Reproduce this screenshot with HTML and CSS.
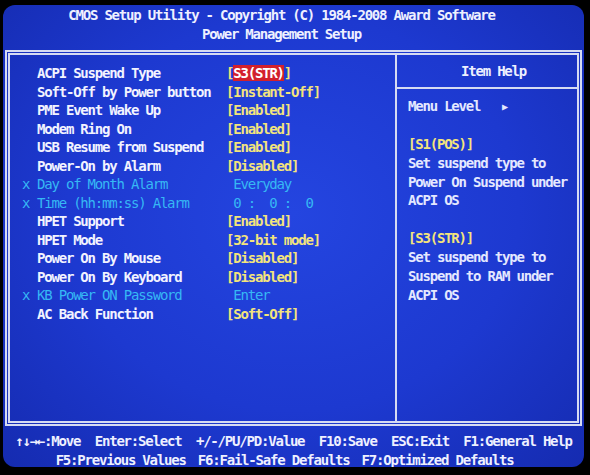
FILE: index.html
```html
<!DOCTYPE html>
<html lang="en">

<head>
    <meta charset="UTF-8">
    <meta name="viewport" content="width=device-width, initial-scale=1.0">
    <title>CMOS Setup Utility - Power Management Setup</title>
    <link rel="stylesheet" href="styles.css">
</head>

<body>

    <div class="screen">
        <div class="title">
            <div>CMOS Setup Utility - Copyright (C) 1984-2008 Award Software</div>
            <div>Power Management Setup</div>
        </div>

        <div class="frame">
            <div class="settings">
                <div class="row"><span class="mark"></span><span class="label">ACPI Suspend Type</span><span class="value">[<span class="selected">S3(STR)</span>]</span></div>
                <div class="row"><span class="mark"></span><span class="label">Soft-Off by Power button</span><span class="value">[Instant-Off]</span></div>
                <div class="row"><span class="mark"></span><span class="label">PME Event Wake Up</span><span class="value">[Enabled]</span></div>
                <div class="row"><span class="mark"></span><span class="label">Modem Ring On</span><span class="value">[Enabled]</span></div>
                <div class="row"><span class="mark"></span><span class="label">USB Resume from Suspend</span><span class="value">[Enabled]</span></div>
                <div class="row"><span class="mark"></span><span class="label">Power-On by Alarm</span><span class="value">[Disabled]</span></div>
                <div class="row disabled"><span class="mark">x</span><span class="label">Day of Month Alarm</span><span class="value"> Everyday</span></div>
                <div class="row disabled"><span class="mark">x</span><span class="label">Time (hh:mm:ss) Alarm</span><span class="value"> 0 :  0 :  0</span></div>
                <div class="row"><span class="mark"></span><span class="label">HPET Support</span><span class="value">[Enabled]</span></div>
                <div class="row"><span class="mark"></span><span class="label">HPET Mode</span><span class="value">[32-bit mode]</span></div>
                <div class="row"><span class="mark"></span><span class="label">Power On By Mouse</span><span class="value">[Disabled]</span></div>
                <div class="row"><span class="mark"></span><span class="label">Power On By Keyboard</span><span class="value">[Disabled]</span></div>
                <div class="row disabled"><span class="mark">x</span><span class="label">KB Power ON Password</span><span class="value"> Enter</span></div>
                <div class="row"><span class="mark"></span><span class="label">AC Back Function</span><span class="value">[Soft-Off]</span></div>
            </div>

            <div class="help">
                <div class="help-head">Item Help</div>
                <div class="help-body">
                    <div class="help-line">Menu Level   <span class="arrow">&#9654;</span></div>
                    <div class="help-line"></div>
                    <div class="help-line option">[S1(POS)]</div>
                    <div class="help-line">Set suspend type to</div>
                    <div class="help-line">Power On Suspend under</div>
                    <div class="help-line">ACPI OS</div>
                    <div class="help-line"></div>
                    <div class="help-line option">[S3(STR)]</div>
                    <div class="help-line">Set suspend type to</div>
                    <div class="help-line">Suspend to RAM under</div>
                    <div class="help-line">ACPI OS</div>
                </div>
            </div>
        </div>

        <div class="keys">
            <div class="keys-line">&#8593;&#8595;&#8594;&#8592;:Move  Enter:Select  +/-/PU/PD:Value  F10:Save  ESC:Exit  F1:General Help</div>
            <div class="keys-line second">
                <span>F5:Previous Values</span>
                <span>F6:Fail-Safe Defaults</span>
                <span>F7:Optimized Defaults</span>
            </div>
        </div>
    </div>

</body>

</html>
```

FILE: styles.css
```css
body {
    margin: 0;
    background-color: #000;
    font-family: "DejaVu Sans Mono", "Liberation Mono", monospace;
    font-weight: bold;
    font-size: 14px;
    letter-spacing: -1.2px;
}

.screen {
    width: 581px;
    height: 462px;
    margin: 5px 0 0 3px;
    box-sizing: border-box;
    padding: 1px 2px 0;
    border-radius: 12px;
    background: radial-gradient(ellipse at 50% 45%, #2445e0 0%, #1d39d0 55%, #152bb0 100%);
    color: #eef0ff;
    overflow: hidden;
}

.title {
    line-height: 18.5px;
    text-align: center;
    padding-right: 24px;
}

.frame {
    display: flex;
    height: 376px;
    margin-top: 7px;
    box-sizing: border-box;
    border: 5px double #d6dbf2;
}

/* left column with the settings */
.settings {
    width: 387px;
    padding: 9px 0 0 12px;
    box-sizing: border-box;
    border-right: 2px solid #d6dbf2;
}

.row {
    display: flex;
    height: 18.5px;
    line-height: 18.5px;
    white-space: pre;
}

.mark {
    width: 15px;
    flex-shrink: 0;
}

.label {
    width: 189px;
    flex-shrink: 0;
    color: #f2f3ff;
}

.value {
    color: #f3e47c;
}

.selected {
    background-color: #d2202c;
    color: #fff;
}

.row.disabled .mark,
.row.disabled .label,
.row.disabled .value {
    color: #36b8f4;
    font-weight: normal;
}

/* right column: item help */
.help {
    flex: 1;
    display: flex;
    flex-direction: column;
}

.help-head {
    height: 32px;
    line-height: 32px;
    padding-left: 64px;
    border-bottom: 2px solid #d6dbf2;
}

.help-body {
    padding: 8px 0 0 11px;
    color: #e4e8ff;
}

.help-line {
    height: 18.9px;
    line-height: 18.9px;
    white-space: pre;
}

.help-line.option {
    color: #f3e47c;
}

.arrow {
    font-size: 10px;
    letter-spacing: 0;
    vertical-align: 1px;
}

.keys {
    margin-top: 6px;
    text-align: center;
}

.keys-line {
    line-height: 18.5px;
    white-space: pre;
}

.keys-line.second {
    display: flex;
    justify-content: center;
    gap: 12px;
    padding-right: 18px;
    white-space: normal;
}

.keys-line.second span {
    white-space: pre;
}
```
